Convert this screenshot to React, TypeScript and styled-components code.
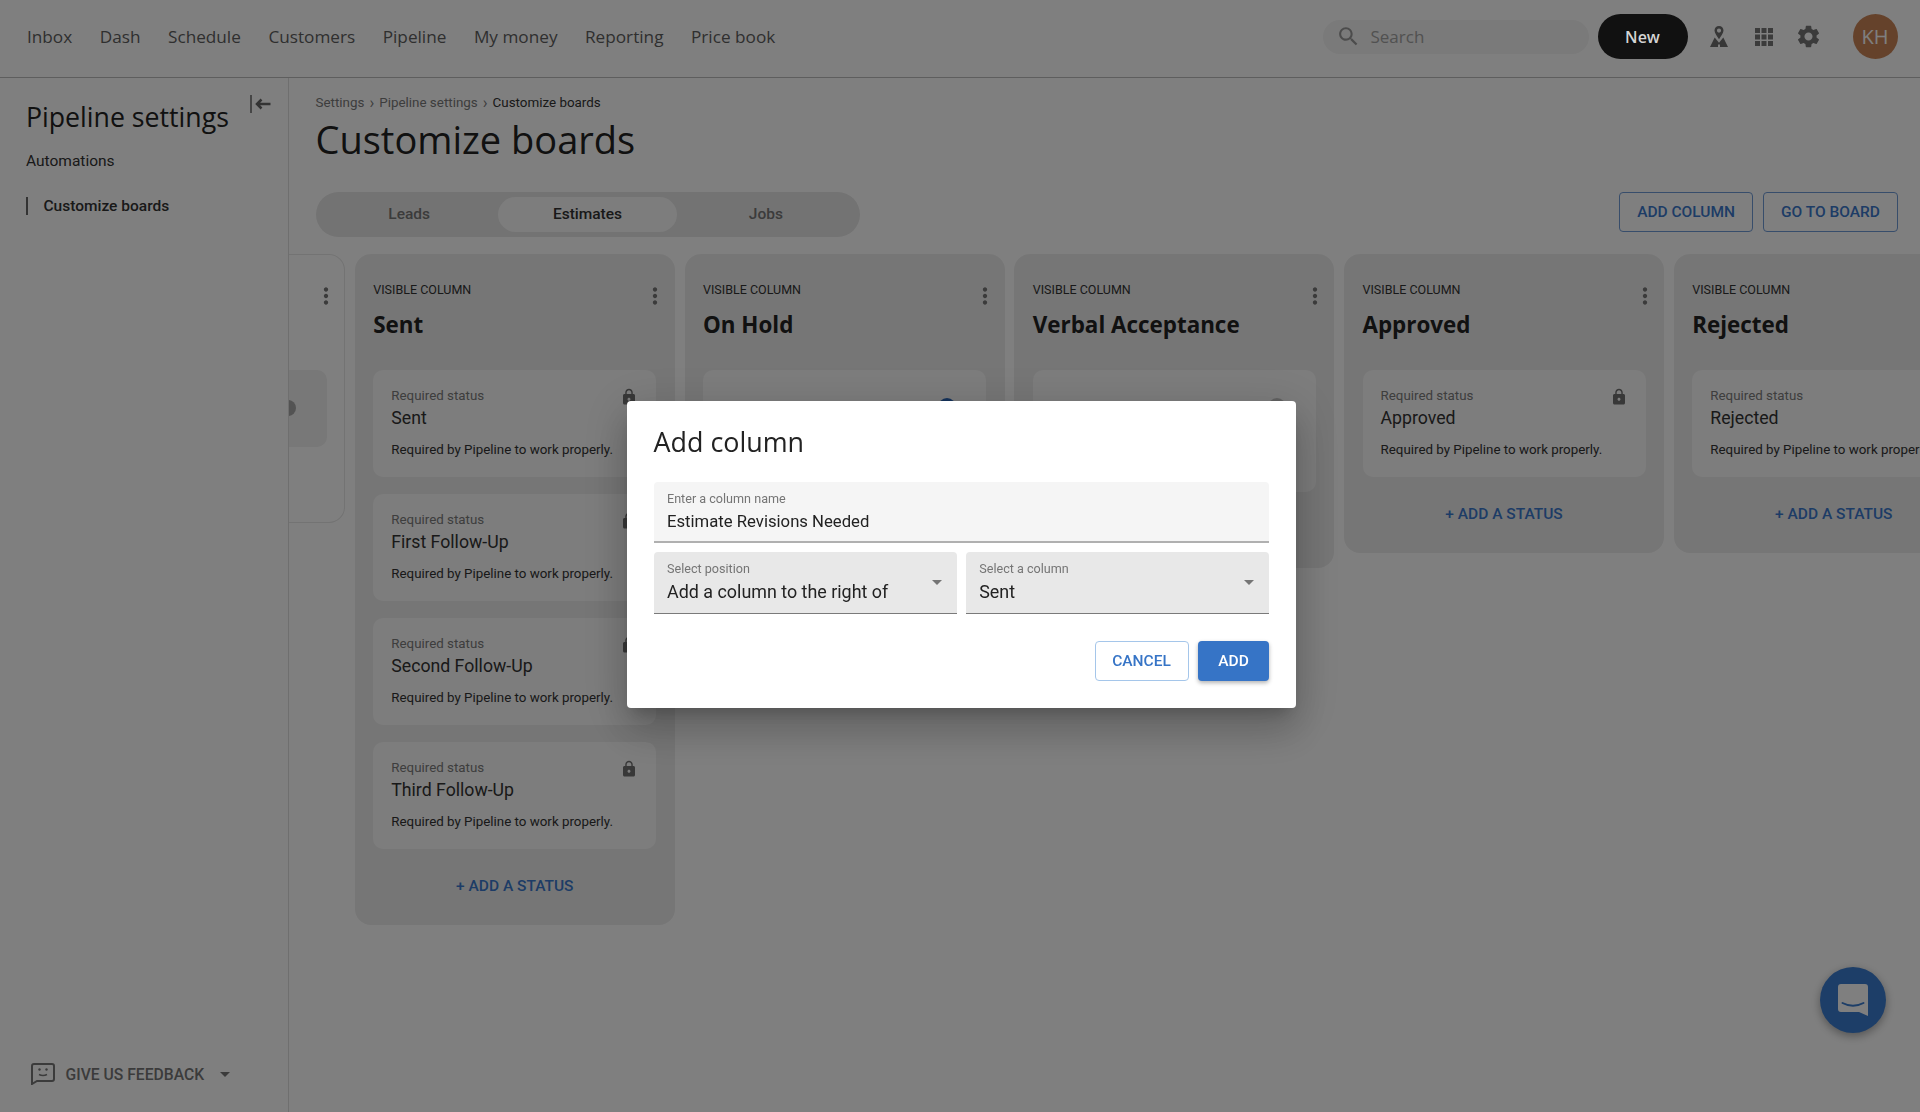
import React from "react";
import styled, { createGlobalStyle } from "styled-components";

const Global = createGlobalStyle`
  html, body { margin: 0; padding: 0; background: #fff; }
  * { box-sizing: border-box; }
  body { font-family: Roboto, "Liberation Sans", sans-serif; color: #222; }
`;

const Page = styled.div`
  width: 100vw;
  height: 100vh;
  display: flex;
  flex-direction: column;
  overflow: hidden;
`;

const Header = styled.header`
  flex: 0 0 78px;
  display: flex;
  align-items: center;
  padding: 0 22.5px 4px 27px;
  border-bottom: 1px solid #bdbdbd;
`;

const Nav = styled.nav`
  display: flex;
  gap: 27.5px;
`;

const NavLink = styled.a`
  font-family: "Open Sans", sans-serif;
  font-size: 17.2px;
  font-weight: 500;
  color: #5e5e5e;
`;

const HeaderRight = styled.div`
  margin-left: auto;
  display: flex;
  align-items: center;
`;

const Search = styled.div`
  width: 266px;
  height: 34px;
  border-radius: 17px;
  background: #f4f4f4;
  display: flex;
  align-items: center;
  gap: 10px;
  padding-left: 13px;
  margin-right: 9px;
  font-family: "Open Sans", sans-serif;
  font-size: 17px;
  color: #a3a3a3;
`;

const NewButton = styled.button`
  position: relative;
  z-index: 20;
  width: 90px;
  height: 45px;
  border: 0;
  border-radius: 23px;
  background: #111;
  color: #d4d4d4;
  font-family: "Open Sans", sans-serif;
  font-size: 16px;
  font-weight: 600;
  margin-right: 8.5px;
`;

const IconButton = styled.div`
  width: 45px;
  height: 45px;
  display: flex;
  align-items: center;
  justify-content: center;
  color: #777;
`;

const Avatar = styled.div`
  width: 45px;
  height: 45px;
  border-radius: 50%;
  margin-left: 21.5px;
  background: #c97f4f;
  color: #fff;
  opacity: 0.95;
  display: flex;
  align-items: center;
  justify-content: center;
  font-family: "Open Sans", sans-serif;
  font-size: 20px;
`;

const Body = styled.div`
  flex: 1;
  display: flex;
  min-height: 0;
`;

const Sidebar = styled.aside`
  flex: 0 0 289px;
  border-right: 1px solid #dedede;
  display: flex;
  flex-direction: column;
  padding: 17px 17px 27px 26px;
`;

const SideTop = styled.div`
  display: flex;
  justify-content: space-between;
  align-items: flex-start;
`;

const SideTitle = styled.h2`
  margin: 4px 0 0;
  font-family: "Open Sans", sans-serif;
  font-size: 26.7px;
  line-height: 36px;
  font-weight: 400;
  color: #222;
`;

const Automations = styled.div`
  margin-top: 16px;
  font-size: 15.5px;
  line-height: 20px;
  color: #333;
`;

const SideActive = styled.div`
  margin-top: 26px;
  border-left: 2px solid #666;
  height: 18px;
  padding-left: 15.5px;
  font-size: 15.5px;
  line-height: 18px;
  font-weight: 500;
  color: #333;
`;

const Feedback = styled.div`
  margin-top: auto;
  display: flex;
  align-items: center;
  padding-left: 5px;
  font-size: 15.7px;
  font-weight: 500;
  color: #777;
`;

const FeedbackLabel = styled.span`
  margin: 0 16px 0 10.5px;
`;

const Arrow = styled.span<{ $color?: string }>`
  width: 0;
  height: 0;
  border-left: 5.5px solid transparent;
  border-right: 5.5px solid transparent;
  border-top: 5.5px solid ${(p) => p.$color || "#777"};
`;

const Main = styled.main`
  flex: 1;
  min-width: 0;
  overflow: hidden;
  padding-top: 17px;
`;

const Crumbs = styled.div`
  margin-left: 26.5px;
  font-size: 13.4px;
  line-height: 16px;
  color: #7a7a7a;
  display: flex;
  gap: 5px;
`;

const CrumbSep = styled.span`
  font-size: 16px;
  line-height: 15px;
`;

const CrumbCurrent = styled.span`
  color: #333;
`;

const PageTitle = styled.h1`
  margin: 5px 0 0 26.5px;
  font-family: "Open Sans", sans-serif;
  font-size: 38px;
  line-height: 46px;
  font-weight: 400;
  color: #222;
`;

const ToolRow = styled.div`
  margin: 30px 22px 0 26.5px;
  display: flex;
  justify-content: space-between;
  align-items: flex-start;
`;

const Tabs = styled.div`
  width: 544px;
  height: 45px;
  padding: 5px 4.5px;
  border-radius: 23px;
  background: #e6e6e6;
  display: flex;
`;

const Tab = styled.div<{ $active?: boolean }>`
  flex: 1;
  border-radius: 18px;
  display: flex;
  align-items: center;
  justify-content: center;
  padding-bottom: 1px;
  font-size: 15.5px;
  font-weight: 500;
  color: ${(p) => (p.$active ? "#333" : "#777")};
  background: ${(p) => (p.$active ? "#fafafa" : "transparent")};
`;

const ToolButtons = styled.div`
  display: flex;
  gap: 10px;
`;

const OutlineButton = styled.button`
  height: 40px;
  padding: 0 17px;
  border: 1px solid #6f9bd6;
  border-radius: 4px;
  background: transparent;
  font-family: Roboto, sans-serif;
  font-size: 15.5px;
  font-weight: 500;
  color: #3b78cc;
`;

const Board = styled.div`
  margin: 17px 0 0 -264px;
  display: flex;
  align-items: flex-start;
  gap: 9.75px;
  width: max-content;
`;

const Column = styled.section<{ $hidden?: boolean }>`
  width: 320px;
  min-height: ${(p) => (p.$hidden ? "269px" : "0")};
  padding: 28px 18.5px 29px;
  border-radius: 16px;
  background: ${(p) => (p.$hidden ? "transparent" : "#ededed")};
  box-shadow: ${(p) => (p.$hidden ? "inset 0 0 0 1px #e6e6e6" : "none")};
`;

const ColumnTop = styled.div`
  height: 16px;
  display: flex;
  justify-content: space-between;
  align-items: flex-start;
`;

const ColumnKind = styled.span`
  font-size: 12.5px;
  line-height: 16px;
  color: #333;
`;

const Kebab = styled.svg`
  flex: none;
  width: 26px;
  height: 26px;
  margin: 1px -12px 0 0;
  fill: #777;
`;

const ColumnTitle = styled.h3`
  margin: 12px 0 30px;
  font-family: "Open Sans", sans-serif;
  font-size: 22.4px;
  line-height: 30px;
  font-weight: 700;
  color: #222;
`;

const Cards = styled.div`
  display: flex;
  flex-direction: column;
  gap: 17px;
`;

const Card = styled.div<{ $tall?: boolean; $dim?: boolean }>`
  position: relative;
  padding: ${(p) => (p.$tall ? "28px" : "18px")} 18px ${(p) => (p.$tall ? "23px" : "18px")};
  height: ${(p) => (p.$dim ? "77px" : "auto")};
  border-radius: 10px;
  background: ${(p) => (p.$dim ? "#f0f0f0" : "#fafafa")};
`;

const CardTop = styled.div`
  height: 16px;
  display: flex;
  justify-content: space-between;
  align-items: flex-start;
`;

const CardLabel = styled.span`
  font-size: 13.35px;
  line-height: 16px;
  color: #7c7c7c;
`;

const Lock = styled.svg`
  flex: none;
  width: 18px;
  height: 18px;
  fill: #707070;
`;

const Toggle = styled.div<{ $on?: boolean }>`
  position: relative;
  flex: none;
  width: 33px;
  height: 14px;
  margin: 3px 12px 0 0;
  border-radius: 7px;
  background: ${(p) => (p.$on ? "#9dbde6" : "#bdbdbd")};
  &::after {
    content: "";
    position: absolute;
    top: -3px;
    right: 0;
    width: 18px;
    height: 18px;
    border-radius: 50%;
    background: ${(p) => (p.$on ? "#2a66b6" : "#c4c4c4")};
  }
`;

const CardName = styled.div`
  margin-top: 3px;
  font-size: 17.7px;
  line-height: 22px;
  color: #333;
`;

const CardText = styled.div`
  margin-top: 12px;
  font-size: 13.35px;
  line-height: 18px;
  color: #333;
  white-space: nowrap;
`;

const HalfDot = styled.span`
  position: absolute;
  top: 30px;
  left: 236px;
  width: 16px;
  height: 16px;
  border-radius: 50%;
  background: #a6a6a6;
`;

const AddStatus = styled.div`
  margin-top: 27px;
  text-align: center;
  font-size: 15.5px;
  line-height: 20px;
  font-weight: 500;
  color: #3b78cc;
`;

const ChatBubble = styled.div`
  position: fixed;
  right: 34px;
  bottom: 79px;
  width: 66px;
  height: 66px;
  border-radius: 50%;
  background: #3a7cd0;
  box-shadow: 0 3px 10px rgba(0, 0, 0, 0.35);
  display: flex;
  align-items: center;
  justify-content: center;
`;

const Overlay = styled.div`
  position: fixed;
  inset: 0;
  z-index: 10;
  background: rgba(0, 0, 0, 0.5);
  display: flex;
  align-items: center;
  justify-content: center;
  padding: 0 0 3px 3px;
`;

const Modal = styled.div`
  position: relative;
  z-index: 30;
  width: 669px;
  height: 307px;
  padding: 22px 27px 21px 26.5px;
  background: #fff;
  border-radius: 4px;
  box-shadow: 0 11px 15px -7px rgba(0, 0, 0, 0.2), 0 24px 38px 3px rgba(0, 0, 0, 0.14),
    0 9px 46px 8px rgba(0, 0, 0, 0.12);
`;

const ModalTitle = styled.h2`
  margin: -1px 0 1px;
  font-family: "Open Sans", sans-serif;
  font-size: 26.9px;
  line-height: 40px;
  font-weight: 400;
  color: #222;
`;

const NameField = styled.div`
  margin-top: 20px;
  height: 61px;
  padding: 9px 13.5px 0;
  background: #f5f5f5;
  border-radius: 4px 4px 0 0;
  border-bottom: 2px solid #b0b0b0;
`;

const FieldRow = styled.div`
  margin-top: 9px;
  display: grid;
  grid-template-columns: 1fr 1fr;
  gap: 9px;
`;

const SelectField = styled.div`
  height: 62px;
  padding: 9px 13.5px 0;
  background: #e8e8e8;
  border-radius: 4px 4px 0 0;
  border-bottom: 1px solid #7a7a7a;
  display: flex;
  justify-content: space-between;
  align-items: flex-start;
`;

const FieldLabel = styled.div`
  font-size: 12.6px;
  line-height: 16px;
  color: #757575;
`;

const FieldValue = styled.div<{ $select?: boolean }>`
  margin-top: 4px;
  font-size: ${(p) => (p.$select ? "17.9px" : "16.7px")};
  line-height: 22px;
  color: #222;
`;

const SelectArrow = styled(Arrow)`
  margin: 19px 1.5px 0 0;
`;

const ModalActions = styled.div`
  margin-top: 27px;
  display: flex;
  justify-content: flex-end;
  gap: 9.5px;
`;

const CancelButton = styled.button`
  width: 94px;
  height: 40px;
  border: 1px solid #a5c6ea;
  border-radius: 4px;
  background: #fff;
  font-family: Roboto, sans-serif;
  font-size: 15.5px;
  font-weight: 500;
  color: #3674c6;
`;

const AddButton = styled.button`
  width: 71px;
  height: 40px;
  border: 0;
  border-radius: 4px;
  background: #3674c6;
  box-shadow: 0 2px 4px rgba(0, 0, 0, 0.3);
  font-family: Roboto, sans-serif;
  font-size: 15.5px;
  font-weight: 500;
  color: #fff;
`;

const MORE = "M12 8c1.1 0 2-.9 2-2s-.9-2-2-2-2 .9-2 2 .9 2 2 2zm0 2c-1.1 0-2 .9-2 2s.9 2 2 2 2-.9 2-2-.9-2-2-2zm0 6c-1.1 0-2 .9-2 2s.9 2 2 2 2-.9 2-2-.9-2-2-2z";
const LOCK = "M18 8h-1V6c0-2.76-2.24-5-5-5S7 3.24 7 6v2H6c-1.1 0-2 .9-2 2v10c0 1.1.9 2 2 2h12c1.1 0 2-.9 2-2V10c0-1.1-.9-2-2-2zm-6 9c-1.1 0-2-.9-2-2s.9-2 2-2 2 .9 2 2-.9 2-2 2zm3.1-9H8.9V6c0-1.71 1.39-3.1 3.1-3.1 1.71 0 3.1 1.39 3.1 3.1v2z";
const SEARCH = "M15.5 14h-.79l-.28-.27C15.41 12.59 16 11.11 16 9.5 16 5.91 13.09 3 9.5 3S3 5.91 3 9.5 5.91 16 9.5 16c1.61 0 3.09-.59 4.23-1.57l.27.28v.79l5 4.99L20.49 19l-4.99-5zm-6 0C7.01 14 5 11.99 5 9.5S7.01 5 9.5 5 14 7.01 14 9.5 11.99 14 9.5 14z";
const GEAR = "M19.14,12.94c0.04-0.3,0.06-0.61,0.06-0.94c0-0.32-0.02-0.64-0.07-0.94l2.03-1.58c0.18-0.14,0.23-0.41,0.12-0.61l-1.92-3.32c-0.12-0.22-0.37-0.29-0.59-0.22l-2.39,0.96c-0.5-0.38-1.03-0.7-1.62-0.94L14.4,2.81c-0.04-0.24-0.24-0.41-0.48-0.41h-3.84c-0.24,0-0.43,0.17-0.47,0.41L9.25,5.35C8.66,5.59,8.12,5.92,7.63,6.29L5.24,5.33c-0.22-0.08-0.47,0-0.59,0.22L2.74,8.87C2.62,9.08,2.66,9.34,2.86,9.48l2.03,1.58C4.84,11.36,4.8,11.69,4.8,12s0.02,0.64,0.07,0.94l-2.03,1.58c-0.18,0.14-0.23,0.41-0.12,0.61l1.92,3.32c0.12,0.22,0.37,0.29,0.59,0.22l2.39-0.96c0.5,0.38,1.03,0.7,1.62,0.94l0.36,2.54c0.05,0.24,0.24,0.41,0.48,0.41h3.84c0.24,0,0.44-0.17,0.47-0.41l0.36-2.54c0.59-0.24,1.13-0.56,1.62-0.94l2.39,0.96c0.22,0.08,0.47,0,0.59-0.22l1.92-3.32c0.12-0.22,0.07-0.47-0.12-0.61L19.14,12.94z M12,15.6c-1.98,0-3.6-1.62-3.6-3.6s1.62-3.6,3.6-3.6s3.6,1.62,3.6,3.6S13.98,15.6,12,15.6z";

const KebabIcon = () => (
  <Kebab viewBox="0 0 24 24"><path d={MORE} /></Kebab>
);

const LockIcon = () => (
  <Lock viewBox="0 0 24 24"><path d={LOCK} /></Lock>
);

const PinIcon = () => (
  <svg width="18" height="21" viewBox="0 0 18 21" fill="#6e6e6e">
    <path fillRule="evenodd" d="M9 0C6.300 0 4.500 2 4.500 4.600 4.500 7.200 7.200 10.600 9 13.300c1.800-2.700 4.500-6.100 4.500-8.700C13.500 2 11.700 0 9 0zm0 2.500a2.100 2.100 0 1 1 0 4.200 2.100 2.100 0 0 1 0-4.200z" />
    <path d="M4.700 11.500 9 16.800l4.300-5.300L18 21h-8v-2.600H8V21H0z" />
  </svg>
);

const GridIcon = () => (
  <svg width="18" height="18" viewBox="0 0 18 18" fill="#777">
    {[0, 6.5, 13].flatMap((y) =>
      [0, 6.5, 13].map((x) => <rect key={`${x}-${y}`} x={x} y={y} width="5" height="5" />)
    )}
  </svg>
);

const CollapseIcon = () => (
  <svg width="21" height="18" viewBox="0 0 21 18" fill="none" stroke="#666">
    <path d="M1 0v18" strokeWidth="1.500" />
    <path d="M20.500 9H7.500M11.500 4.500 7 9l4.500 4.500" strokeWidth="2.500" />
  </svg>
);

const FeedbackIcon = () => (
  <svg width="24" height="22" viewBox="0 0 24 22" fill="none" stroke="#777" strokeWidth="2">
    <path d="M3 1h18a2 2 0 0 1 2 2v13a2 2 0 0 1-2 2H6l-5 3V3a2 2 0 0 1 2-2z" />
    <circle cx="8.500" cy="6.500" r="1.200" fill="#777" stroke="none" />
    <circle cx="15.500" cy="6.500" r="1.200" fill="#777" stroke="none" />
    <path d="M8 11.500c2.300 1.200 5.700 1.200 8 0" strokeWidth="1.500" />
  </svg>
);

const ChatIcon = () => (
  <svg width="30" height="32" viewBox="0 0 30 32" fill="none">
    <path d="M3 0h24a3 3 0 0 1 3 3v29l-9-4H3a3 3 0 0 1-3-3V3a3 3 0 0 1 3-3z" fill="#fff" />
    <path d="M4.500 19c6 3.500 15 3.500 21 0" stroke="#3a7cd0" strokeWidth="2" strokeLinecap="round" />
  </svg>
);

const Icon = ({ d, size, color }: { d: string; size: number; color: string }) => (
  <svg width={size} height={size} viewBox="0 0 24 24" fill={color}><path d={d} /></svg>
);

const REQ = "Required by Pipeline to work properly.";

const columns = [
  { title: "Sent", cards: ["Sent", "First Follow-Up", "Second Follow-Up", "Third Follow-Up"], kind: "lock" },
  { title: "On Hold", cards: ["On Hold"], kind: "on" },
  { title: "Verbal Acceptance", cards: ["Verbal Acceptance"], kind: "off" },
  { title: "Approved", cards: ["Approved"], kind: "lock" },
  { title: "Rejected", cards: ["Rejected"], kind: "lock" },
];

export default function App() {
  return (
    <>
      <Global />
      <Page>
        <Header>
          <Nav>
            {["Inbox", "Dash", "Schedule", "Customers", "Pipeline", "My money", "Reporting", "Price book"].map((n) => (
              <NavLink key={n}>{n}</NavLink>
            ))}
          </Nav>
          <HeaderRight>
            <Search>
              <Icon d={SEARCH} size={25} color="#999" />
              Search
            </Search>
            <NewButton>New</NewButton>
            <IconButton><PinIcon /></IconButton>
            <IconButton><GridIcon /></IconButton>
            <IconButton><Icon d={GEAR} size={27} color="#777" /></IconButton>
            <Avatar>KH</Avatar>
          </HeaderRight>
        </Header>
        <Body>
          <Sidebar>
            <SideTop>
              <SideTitle>Pipeline settings</SideTitle>
              <CollapseIcon />
            </SideTop>
            <Automations>Automations</Automations>
            <SideActive>Customize boards</SideActive>
            <Feedback>
              <FeedbackIcon />
              <FeedbackLabel>GIVE US FEEDBACK</FeedbackLabel>
              <Arrow />
            </Feedback>
          </Sidebar>
          <Main>
            <Crumbs>
              <span>Settings</span><CrumbSep>›</CrumbSep><span>Pipeline settings</span><CrumbSep>›</CrumbSep>
              <CrumbCurrent>Customize boards</CrumbCurrent>
            </Crumbs>
            <PageTitle>Customize boards</PageTitle>
            <ToolRow>
              <Tabs>
                <Tab>Leads</Tab>
                <Tab $active>Estimates</Tab>
                <Tab>Jobs</Tab>
              </Tabs>
              <ToolButtons>
                <OutlineButton>ADD COLUMN</OutlineButton>
                <OutlineButton>GO TO BOARD</OutlineButton>
              </ToolButtons>
            </ToolRow>
            <Board>
              <Column $hidden>
                <ColumnTop>
                  <ColumnKind>HIDDEN</ColumnKind>
                  <KebabIcon />
                </ColumnTop>
                <ColumnTitle>Draft</ColumnTitle>
                <Card $dim>
                  <HalfDot />
                </Card>
              </Column>
              {columns.map((c) => (
                <Column key={c.title}>
                  <ColumnTop>
                    <ColumnKind>VISIBLE COLUMN</ColumnKind>
                    <KebabIcon />
                  </ColumnTop>
                  <ColumnTitle>{c.title}</ColumnTitle>
                  <Cards>
                    {c.cards.map((name) => (
                      <Card key={name} $tall={c.kind !== "lock"}>
                        <CardTop>
                          <CardLabel>{c.kind === "lock" ? "Required status" : "Custom status"}</CardLabel>
                          {c.kind === "lock" ? <LockIcon /> : <Toggle $on={c.kind === "on"} />}
                        </CardTop>
                        <CardName>{name}</CardName>
                        <CardText>{c.kind === "lock" ? REQ : "Shown on the board."}</CardText>
                      </Card>
                    ))}
                  </Cards>
                  <AddStatus>+ ADD A STATUS</AddStatus>
                </Column>
              ))}
            </Board>
          </Main>
        </Body>
        <ChatBubble><ChatIcon /></ChatBubble>
      </Page>
      <Overlay>
        <Modal>
          <ModalTitle>Add column</ModalTitle>
          <NameField>
            <FieldLabel>Enter a column name</FieldLabel>
            <FieldValue>Estimate Revisions Needed</FieldValue>
          </NameField>
          <FieldRow>
            <SelectField>
              <div>
                <FieldLabel>Select position</FieldLabel>
                <FieldValue $select>Add a column to the right of</FieldValue>
              </div>
              <SelectArrow $color="#757575" />
            </SelectField>
            <SelectField>
              <div>
                <FieldLabel>Select a column</FieldLabel>
                <FieldValue $select>Sent</FieldValue>
              </div>
              <SelectArrow $color="#757575" />
            </SelectField>
          </FieldRow>
          <ModalActions>
            <CancelButton>CANCEL</CancelButton>
            <AddButton>ADD</AddButton>
          </ModalActions>
        </Modal>
      </Overlay>
    </>
  );
}
